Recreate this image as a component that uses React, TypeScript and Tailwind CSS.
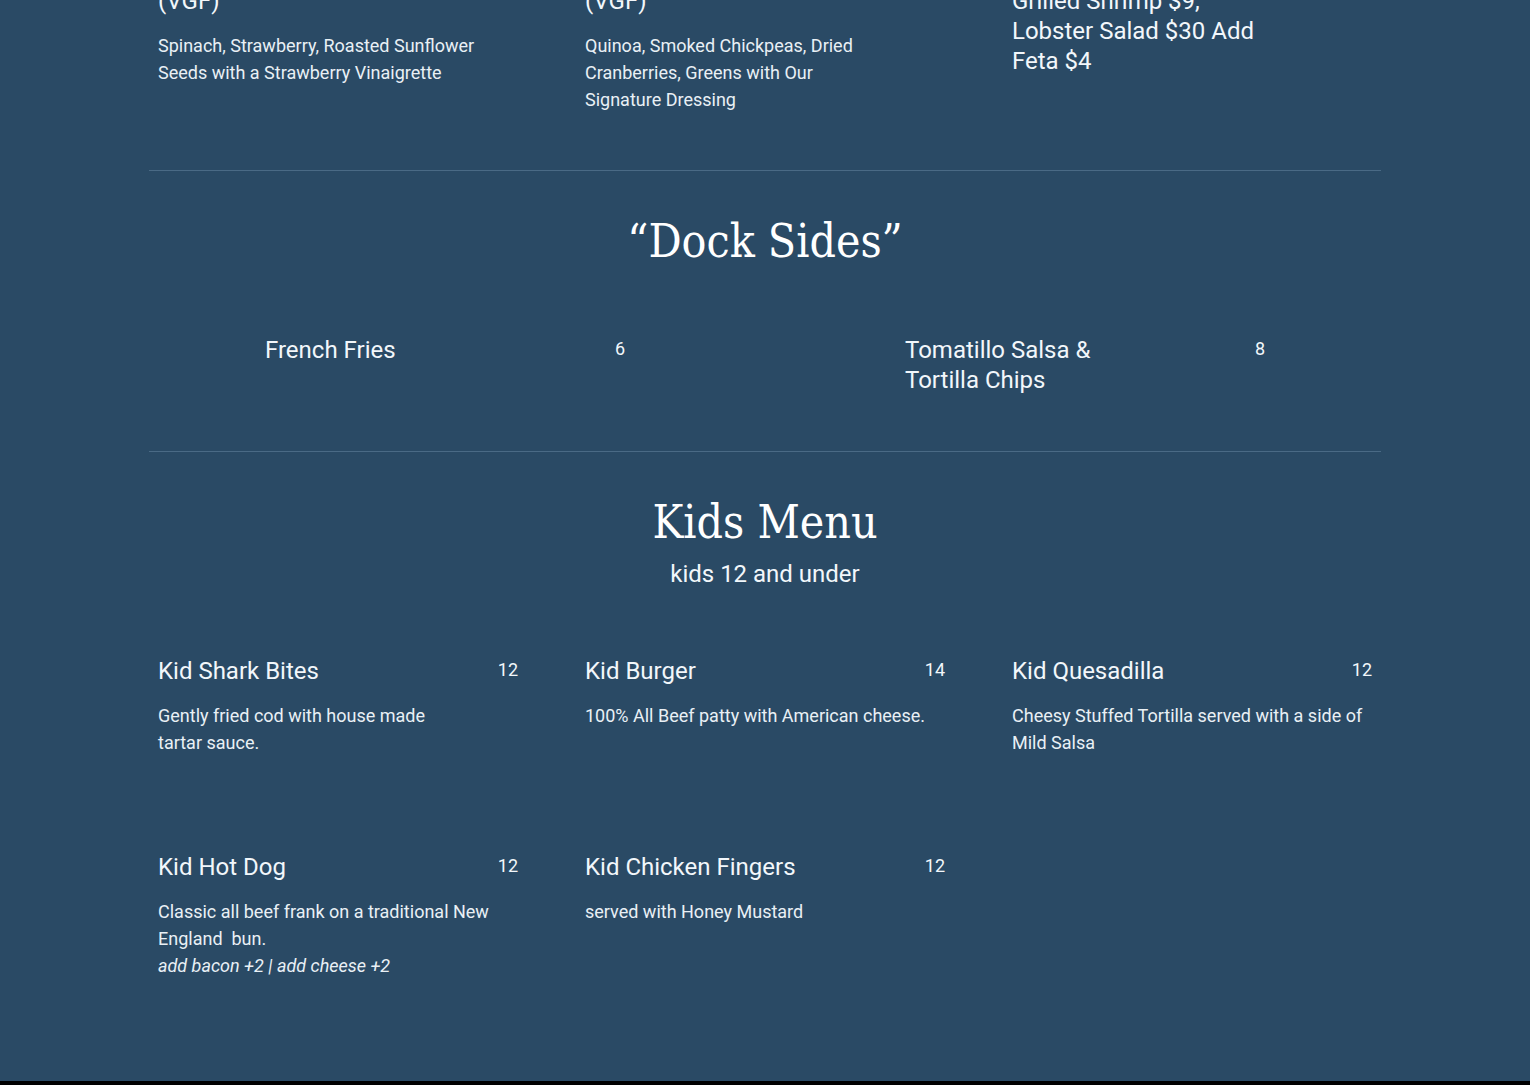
import React from 'react';

type Item = {
  name: React.ReactNode;
  price?: string;
  desc?: React.ReactNode;
  note?: string;
};

const salads: Item[] = [
  {
    name: (
      <>
        Strawberry Salad
        <br />
        (VGF)
      </>
    ),
    price: '14',
    desc: 'Spinach, Strawberry, Roasted Sunflower Seeds with a Strawberry Vinaigrette',
  },
  {
    name: (
      <>
        Quinoa Salad
        <br />
        (VGF)
      </>
    ),
    price: '15',
    desc: (
      <>
        Quinoa, Smoked Chickpeas, Dried
        <br />
        Cranberries, Greens with Our
        <br />
        Signature Dressing
      </>
    ),
  },
  {
    name: 'Add Grilled Chicken $7, Grilled Shrimp $9, Lobster Salad $30 Add Feta $4',
  },
];

const sides: Item[] = [
  { name: 'French Fries', price: '6' },
  { name: 'Tomatillo Salsa & Tortilla Chips', price: '8' },
];

const kids: Item[] = [
  {
    name: 'Kid Shark Bites',
    price: '12',
    desc: (
      <>
        Gently fried cod with house made
        <br />
        tartar sauce.
      </>
    ),
  },
  { name: 'Kid Burger', price: '14', desc: '100% All Beef patty with American cheese.' },
  { name: 'Kid Quesadilla', price: '12', desc: 'Cheesy Stuffed Tortilla served with a side of Mild Salsa' },
  {
    name: 'Kid Hot Dog',
    price: '12',
    desc: 'Classic all beef frank on a traditional New England\u00a0 bun.',
    note: 'add bacon +2 | add cheese +2',
  },
  { name: 'Kid Chicken Fingers', price: '12', desc: 'served with Honey Mustard' },
];

const MenuItem: React.FC<{ item: Item }> = ({ item }) => (
  <div className="w-[360px]">
    <div className="flex items-start justify-between">
      <h3 className="max-w-[70%] text-[24px] leading-[30px] text-[#f2f7fb]">{item.name}</h3>
      {item.price && <span className="text-[18px] leading-[27px] text-[#f2f7fb]">{item.price}</span>}
    </div>
    {item.desc && <p className="mt-4 text-[18px] leading-[27px] text-[#e9f0f5]">{item.desc}</p>}
    {item.note && <p className="text-[18px] leading-[27px] italic text-[#e9f0f5]">{item.note}</p>}
  </div>
);

const Heading: React.FC<{ children: React.ReactNode }> = ({ children }) => (
  <h2
    className="text-center text-[46px] leading-[56px] font-medium text-white"
    style={{ fontFamily: '"DejaVu Serif Condensed", "DejaVu Serif", serif', fontStretch: 'condensed' }}
  >
    {children}
  </h2>
);

export default function App() {
  return (
    <div className="min-h-screen bg-black font-['Roboto',sans-serif]">
      <div className="bg-[#2a4a65] h-[1081px] overflow-hidden">
        <div className="mx-auto max-w-[1232px] -mt-[44px]">
          {/* Salads (scrolled past) */}
          <section className="px-[9px] pb-[57px] border-b border-[#4a6a85]">
            <div className="grid grid-cols-3 gap-x-[67px]">
              {salads.map((s, i) => (
                <MenuItem key={i} item={s} />
              ))}
            </div>
          </section>

          {/* Dock Sides */}
          <section className="pt-[42px] pb-[56px] border-b border-[#4a6a85]">
            <Heading>“Dock Sides”</Heading>
            <div className="mt-[66px] px-[116px] flex justify-between">
              {sides.map((s, i) => (
                <MenuItem key={i} item={s} />
              ))}
            </div>
          </section>

          {/* Kids */}
          <section className="pt-[42px] px-[9px]">
            <Heading>Kids Menu</Heading>
            <p className="mt-2 text-center text-[24px] leading-[32px] text-[#f2f7fb]">kids 12 and under</p>
            <div className="mt-[66px] grid grid-cols-3 gap-x-[67px] gap-y-[96px]">
              {kids.map((k, i) => (
                <MenuItem key={i} item={k} />
              ))}
            </div>
          </section>
        </div>
      </div>
    </div>
  );
}
